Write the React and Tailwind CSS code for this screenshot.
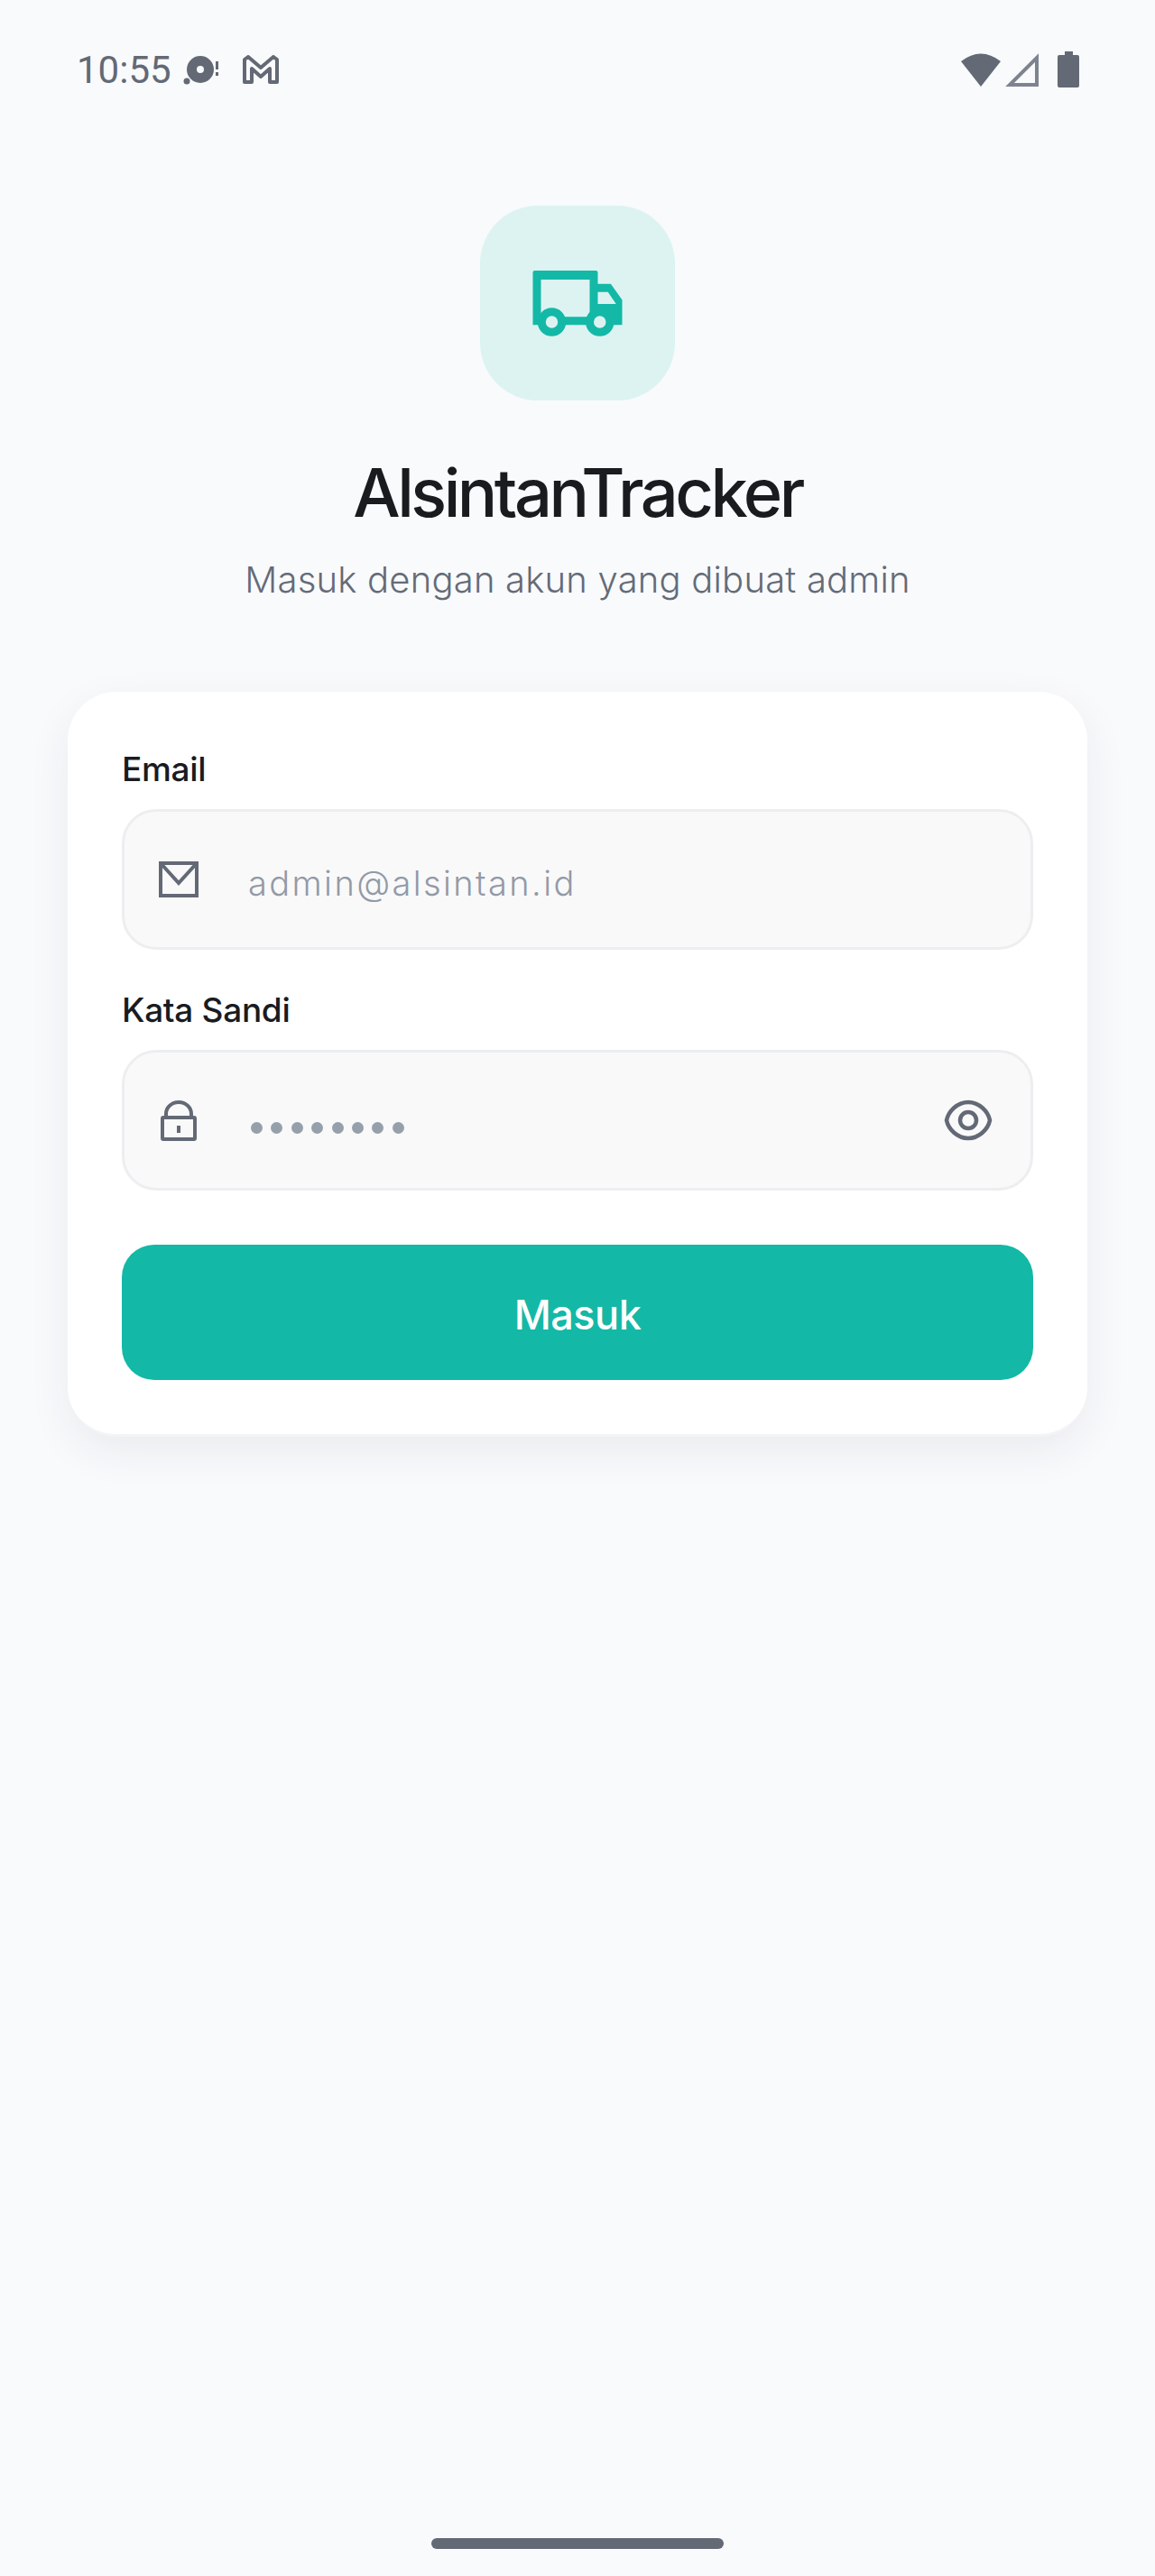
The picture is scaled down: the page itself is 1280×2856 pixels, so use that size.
const font = { fontFamily: '"Inter", "Liberation Sans", sans-serif' };

const StatusBar = () => (
  <div className="flex justify-between items-center h-[36px] mt-[59px] pl-[84px] pr-[84px]">
    <div className="flex items-center">
      <span className="ml-[1px] mt-[2px] text-[42px] leading-[36px] text-[#636975] font-['Roboto',sans-serif]">10:55</span>
      <svg className="ml-[13px]" width="40" height="36" viewBox="0 0 40 36" fill="#636975">
        <path fillRule="evenodd" d="M19 3a15 15 0 1 1 0 30a15 15 0 0 1 0-30zm0 11a4 4 0 1 0 0 8a4 4 0 0 0 0-8z" />
        <circle cx="4" cy="31" r="3.5" />
        <rect x="36" y="9" width="3" height="9" />
        <rect x="36" y="21" width="3" height="4" />
      </svg>
      <svg className="ml-[25px]" width="42" height="32" viewBox="0 0 42 32" fill="none" stroke="#636975" strokeWidth="4" strokeLinejoin="round">
        <path d="M3 30V5l4-3l14 12L35 2l4 3v25h-8V15L21 24L11 15v15z" />
      </svg>
    </div>
    <div className="flex items-center">
      <svg width="46" height="38" viewBox="0 0 46 38" fill="#636975">
        <path d="M1 10Q23-7 45 10L23 38z" />
      </svg>
      <svg className="ml-[3px]" width="38" height="38" viewBox="0 0 38 38" fill="none" stroke="#7d838f" strokeWidth="4">
        <path d="M36 6V36H6z" />
      </svg>
      <svg className="ml-[21px]" width="24" height="40" viewBox="0 0 24 40" fill="#636975">
        <path d="M8 0h9v4h5a2 2 0 0 1 2 2v32a2 2 0 0 1-2 2H2a2 2 0 0 1-2-2V6a2 2 0 0 1 2-2h6z" />
      </svg>
    </div>
  </div>
);

const Field = ({ label, icon, placeholder, dots, right }) => (
  <div>
    <label className="block text-[37px] leading-[50px] font-medium text-[#1a1b1f] tracking-[-0.3px]">{label}</label>
    <div className="flex items-center h-[156px] mt-[19px] rounded-[38px] border-[3px] border-[#eceef0] bg-[#f9f9fa]">
      <div className="w-[120px] flex justify-center shrink-0">{icon}</div>
      {dots ? (
        <div className="flex gap-[9.4px] mt-[16px] ml-[20px] flex-1">
          {[0, 1, 2, 3, 4, 5, 6, 7].map((i) => (
            <span key={i} className="w-[13px] h-[13px] rounded-full bg-[#95a0ab]" />
          ))}
        </div>
      ) : (
        <div className="text-[38px] ml-[17px] mt-[8px] flex-1 font-light tracking-[2.4px] text-[#929aa6]">{placeholder}</div>
      )}
      {right}
    </div>
  </div>
);

export default function App() {
  return (
    <div style={font} className="relative w-[1280px] h-[2856px] bg-[#f9fafc] overflow-hidden">
      <StatusBar />
      <div className="flex flex-col items-center">
        <div className="flex items-center justify-center w-[216px] h-[216px] mt-[133px] rounded-[64px] bg-[#dcf3f2]">
          <svg width="108" height="108" viewBox="0 0 24 24">
            <path fill="#14b8a6" fillRule="evenodd" d="M1 4.5C1 4.2 1.2 4 1.5 4H16.5c.3 0 .5.2.5.5V7.3h3.2L23 11.2V17.4H1zM3 6.2V15.4H15V6.2zM17 9.3V12.2h4.5L19.5 9.3z" />
            <circle cx="5.67" cy="16.67" r="2.5" fill="#dcf3f2" stroke="#14b8a6" strokeWidth="2" />
            <circle cx="17.5" cy="16.67" r="2.5" fill="#dcf3f2" stroke="#14b8a6" strokeWidth="2" />
          </svg>
        </div>
        <h1 className="mt-[56px] text-[74px] leading-[92px] font-medium tracking-[-3.5px] text-[#1a1b1f]">AlsintanTracker</h1>
        <p className="mt-[22px] text-[40px] leading-[58px] font-light tracking-[0.2px] text-[#646b78]">Masuk dengan akun yang dibuat admin</p>
      </div>
      <div className="mt-[95px] mx-[75px] px-[60px] pt-[61px] pb-[60px] rounded-[54px] border-b-[3px] border-[#f3f4f6] bg-white shadow-[0_16px_48px_rgba(30,40,60,0.07)]">
        <Field
          label="Email"
          placeholder="admin@alsintan.id"
          icon={
            <svg width="44" height="40" viewBox="0 0 44 40" fill="none" stroke="#636975" strokeWidth="4">
              <path d="M2 2H42V38H2zM2 2L22 24L42 2" />
            </svg>
          }
        />
        <div className="mt-[42px]">
          <Field
            label="Kata Sandi"
            dots
            icon={
              <svg width="40" height="45" viewBox="0 0 40 45" fill="none" stroke="#636975" strokeWidth="4">
                <rect x="2" y="19" width="36" height="24" rx="1" />
                <path d="M6 19V15a14 13 0 0 1 28 0v4" />
                <rect x="18" y="28" width="4" height="8" fill="#636975" stroke="none" />
              </svg>
            }
            right={
              <svg className="mr-[42px]" width="54" height="46" viewBox="0 0 54 46" fill="none" stroke="#636975" strokeWidth="4.5">
                <path d="M3 23C5 13 15 3 27 3s22 10 24 20c-2 10-12 20-24 20S5 33 3 23z" />
                <circle cx="27" cy="23" r="9" />
              </svg>
            }
          />
        </div>
        <button className="block w-full h-[150px] mt-[60px] pt-[5px] rounded-[36px] bg-[#14b8a6] text-white text-[45px] font-medium tracking-[-0.5px]">Masuk</button>
      </div>
      <div className="absolute bottom-[30px] left-[478px] w-[324px] h-[12px] rounded-full bg-[#636975]" />
    </div>
  );
}
